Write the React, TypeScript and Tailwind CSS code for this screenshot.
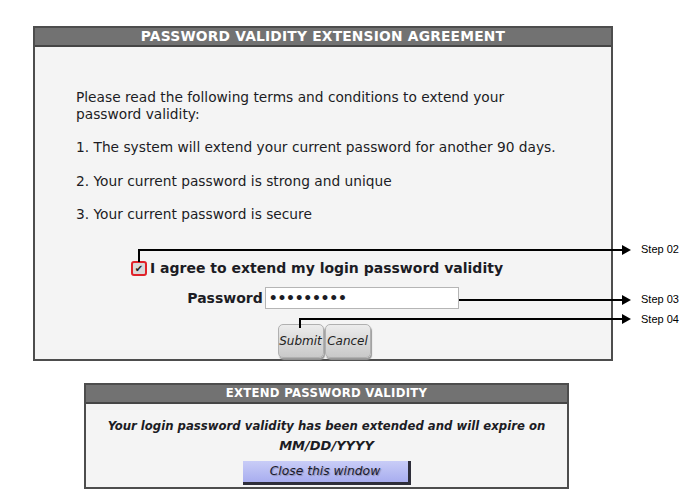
import React from "react";

const terms = [
  "1. The system will extend your current password for another 90 days.",
  "2. Your current password is strong and unique",
  "3. Your current password is secure",
];

const Arrow = ({ top, left, width }: { top: number; left: number; width: number }) => (
  <div className="absolute flex items-center" style={{ top: top - 5, left }}>
    <div className="h-[2px] bg-black" style={{ width }} />
    <div className="h-0 w-0 border-y-[5px] border-l-[9px] border-y-transparent border-l-black" />
  </div>
);

const StepLabel = ({ top, children }: { top: number; children: React.ReactNode }) => (
  <div
    className="absolute left-[641px] text-[11px] leading-none text-black font-['Liberation_Sans',sans-serif]"
    style={{ top: top - 6 }}
  >
    {children}
  </div>
);

export default function App() {
  return (
    <div className="relative h-[500px] w-[700px] overflow-hidden bg-white font-['DejaVu_Sans',Verdana,sans-serif] text-[#1c1c24]">
      <div className="pl-[33px] pt-[26px]">
        {/* Agreement box */}
        <div className="w-[580px] border-2 border-[#4d4d4d] bg-[#f4f4f4]">
          <div className="flex h-[19px] items-center justify-center border-b-2 border-[#454545] bg-[#727272] text-[13.8px] font-bold tracking-[0.2px] text-white">
            PASSWORD VALIDITY EXTENSION AGREEMENT
          </div>
          <div className="pl-[41px] pt-[42px] pb-px text-[13.75px] leading-[17px]">
            <p>
              Please read the following terms and conditions to extend your
              <br />
              password validity:
            </p>
            <p className="mt-[16px]">{terms[0]}</p>
            <p className="mt-[17px]">{terms[1]}</p>
            <p className="mt-[16px]">{terms[2]}</p>

            <div className="-ml-[41px] flex flex-col items-center">
              <div className="mt-[37px] flex h-[17px] items-center gap-[3px] pr-[12px]">
                <span className="flex h-[15px] w-[16px] items-center justify-center rounded-[3px] border-2 border-[#e0222a] bg-[#d9d9d9] text-[10px] leading-none text-[#222]">
                  ✔
                </span>
                <span className="text-[14px] font-bold">I agree to extend my login password validity</span>
              </div>

              <div className="mt-[10px] flex h-[22px] items-center gap-[2px]">
                <span className="text-[14px] font-bold">Password</span>
                <div className="flex h-[22px] w-[194px] items-center border border-[#b5b5b5] bg-white pl-[3px] text-[14px] font-bold tracking-[-0.3px]">
                  •••••••••
                </div>
              </div>

              <div className="mt-[15px] flex gap-px pl-[2px]">
                <button className="h-[34px] w-[46px] rounded-[5px] border border-[#b0b0b0] bg-gradient-to-b from-[#ececec] to-[#c9c9c9] text-[12px] italic text-[#222] shadow-[1px_2px_1px_#9a9a9a]">
                  Submit
                </button>
                <button className="h-[34px] w-[46px] rounded-[5px] border border-[#b0b0b0] bg-gradient-to-b from-[#ececec] to-[#c9c9c9] text-[12px] italic text-[#222] shadow-[1px_2px_1px_#9a9a9a]">
                  Cancel
                </button>
              </div>
            </div>
          </div>
        </div>
      </div>

      {/* Result box */}
      <div className="pl-[84px] pt-[22px]">
        <div className="w-[485px] border-2 border-[#4d4d4d] bg-[#f4f4f4]">
          <div className="flex h-[19px] items-center justify-center border-b-2 border-[#454545] bg-[#727272] text-[11.7px] font-bold tracking-[0.3px] text-white">
            EXTEND PASSWORD VALIDITY
          </div>
          <div className="flex flex-col items-center pt-[13px] pb-[2px] text-[11.7px] font-bold italic leading-[19px]">
            <p>Your login password validity has been extended and will expire on</p>
            <p className="text-[13px]">MM/DD/YYYY</p>
            <button className="mt-[6px] h-[24px] w-[168px] border-r-[3px] border-b-[3px] border-[#2e2e3a] bg-gradient-to-b from-[#c9cdf7] to-[#a8adef] text-[12.3px] font-normal italic text-[#1a1a2a] [text-shadow:1px_1px_1px_#8a8ab0]">
              Close this window
            </button>
          </div>
        </div>
      </div>

      {/* Step callouts */}
      <div className="absolute left-[138px] top-[249px] h-[13px] w-[2px] bg-black" />
      <Arrow top={250} left={138} width={484} />
      <StepLabel top={250}>Step 02</StepLabel>

      <Arrow top={300} left={459} width={163} />
      <StepLabel top={300}>Step 03</StepLabel>

      <div className="absolute left-[299px] top-[318px] h-[10px] w-[2px] bg-black" />
      <Arrow top={319} left={299} width={323} />
      <StepLabel top={320}>Step 04</StepLabel>
    </div>
  );
}
